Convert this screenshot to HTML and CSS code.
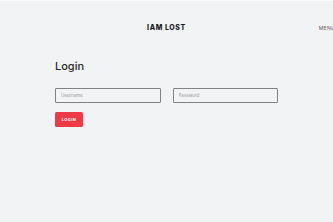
FILE: index.html
```html
<!DOCTYPE html>
<html lang="en">
<head>
  <meta charset="UTF-8" />
  <meta name="viewport" content="width=device-width, initial-scale=1.0"/>
  <title>IAM LOST - Login</title>
  <link rel="stylesheet" href="styles.css">
</head>
<body>
  <header class="topbar">
    <div></div>
    <div class="brand">IAM LOST</div>
    <div class="menu">MENU</div>
  </header>

  <main class="login">
    <h1>Login</h1>
    <form class="login-form">
      <div class="fields">
        <input type="text" placeholder="Username">
        <input type="password" placeholder="Password">
      </div>
      <button type="button" class="btn">LOGIN</button>
    </form>
  </main>
</body>
</html>
```

FILE: styles.css
```css
* {
  margin: 0;
  padding: 0;
  box-sizing: border-box;
}

html, body {
  width: 100%;
  height: 100%;
  overflow: hidden;
}

body {
  background: #f2f3f5;
  border-top: 1px solid #fafafa;
  font-family: Inter, 'Open Sans', sans-serif;
  color: #222;
}

.topbar {
  display: grid;
  grid-template-columns: 1fr auto 1fr;
  align-items: center;
  height: 53px;
}

.brand {
  font-size: 7px;
  font-weight: 800;
  letter-spacing: 0.6px;
  color: #1c1c1c;
}

.menu {
  justify-self: end;
  margin-right: -2px;
  font-size: 5px;
  letter-spacing: 0.3px;
  color: #555;
}

.login {
  padding: 5px 55px 0;
}

.login h1 {
  font-size: 11px;
  font-weight: 500;
  color: #2a2a2a;
  margin-bottom: 15px;
}

.fields {
  display: flex;
  gap: 12px;
}

.fields input {
  width: 106px;
  height: 15px;
  border: 1.5px solid #828282;
  border-radius: 1px;
  background: #f2f3f5;
  padding: 0 5px;
  font-family: inherit;
  font-size: 4.5px;
  color: #333;
  outline: none;
}

.fields input::placeholder {
  color: #999;
}

.btn {
  margin-top: 9px;
  width: 28px;
  height: 15px;
  border: none;
  border-radius: 1.5px;
  background: #ee3a46;
  color: #fff;
  font-family: inherit;
  font-size: 4px;
  font-weight: 700;
  letter-spacing: 0.4px;
}
```
